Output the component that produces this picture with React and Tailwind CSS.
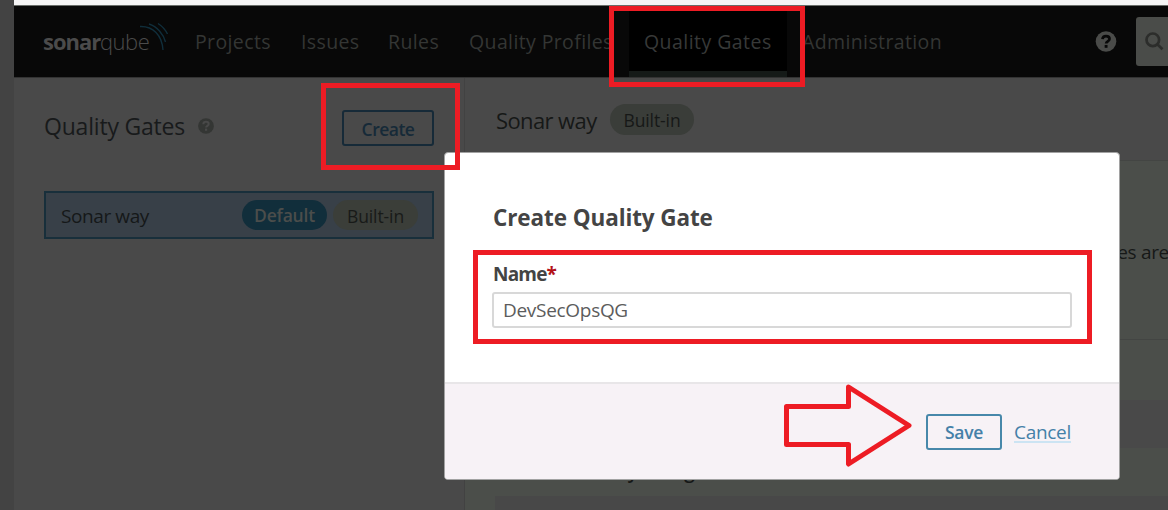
import React from "react";

const NavItem = ({ className = "", children }) => (
  <div className={`h-full shrink-0 whitespace-nowrap pl-[15px] leading-[72px] ${className}`}>{children}</div>
);

const HelpIcon = ({ className, fill, mark }) => (
  <svg className={className} viewBox="0 0 22 22">
    <circle cx="11" cy="11" r="10.8" fill={fill} />
    <path d="M7.3 8.6C7.5 6.4 9 5.3 11 5.3C13.2 5.3 14.7 6.5 14.7 8.3C14.7 10.8 11.2 10.8 11.1 13.1" fill="none" stroke={mark} strokeWidth="2.8" />
    <rect x="9.6" y="14.6" width="3" height="3" fill={mark} />
  </svg>
);

function Header() {
  return (
    <header className="flex h-[71px] shrink-0 bg-[#080808] text-[19.5px] tracking-[0.38px] text-[#343634]">
      <div className="flex h-full w-[166px] shrink-0 pl-[29px]">
        <div className="mt-[19px] flex h-8 items-center text-[22px] tracking-[-1px] text-[#4b4b4b]">
          <span className="w-[57px] font-bold">sonar</span>
          <span className="w-[50px] tracking-[-0.5px] font-light">qube</span>
        </div>
        <svg className="-ml-[11px] mt-[16px] h-[30px] w-[32px]" viewBox="0 0 32 30" fill="none" stroke="#102e3b" strokeWidth="1.4">
          <path d="M1 4.5C14 4 23 13 24 28" />
          <path d="M10 2C18 4.5 24.5 12 26.500 20" />
          <path d="M19 1.500C23 4 26.500 8 28.500 12" />
        </svg>
      </div>
      <NavItem className="w-[106px]">Projects</NavItem>
      <NavItem className="w-[87px]">Issues</NavItem>
      <NavItem className="w-[81px]">Rules</NavItem>
      <NavItem className="w-[175px]">Quality Profiles</NavItem>
      <NavItem className="w-[158px] border-b-[6px] border-[#151a18] bg-black tracking-[0.45px] text-[#373938]">Quality Gates</NavItem>
      <NavItem className="w-[308px]">Administration</NavItem>
      <div className="flex h-full w-[41px] shrink-0 pt-[25px]">
        <HelpIcon className="h-[21px] w-[22px]" fill="#4a4b49" mark="#080808" />
      </div>
      <div className="mt-[11px] h-[49px] w-[40px] shrink-0 rounded-[3px] bg-[#4a4c49] pl-[9px] pt-[15px]">
        <svg className="h-[19px] w-[19px]" viewBox="0 0 19 19" fill="none" stroke="#2c2d2b" strokeWidth="2.7">
          <circle cx="7.8" cy="7.8" r="6.3" />
          <path d="M12.3 12.3L17.5 17.3" />
        </svg>
      </div>
    </header>
  );
}

function Sidebar() {
  return (
    <aside className="w-[451px] shrink-0 border-r border-[#424242] pl-[30px] pr-[30px]">
      <div className="flex h-[113px] items-start">
        <h1 className="mt-[32px] w-[154px] whitespace-nowrap text-[23px] leading-8 tracking-[-0.2px] text-[#181a1b]">Quality Gates</h1>
        <HelpIcon className="mt-[40px] h-[16px] w-[16px]" fill="#343634" mark="#494949" />
        <button className="ml-auto mt-[32px] h-9 w-[92px] rounded-[3px] border-2 border-[#162a38] pt-[2px] text-[17.5px] font-semibold tracking-[-0.5px] text-[#162a38]">Create</button>
      </div>
      <div className="flex h-12 items-center border-2 border-[#182f3b] bg-[#384048] pl-[15px] pr-[14px]">
        <span className="grow pt-[2px] text-[19px] tracking-[-0.4px] text-[#151819]">Sonar way</span>
        <span className="h-[30px] w-[85px] rounded-full bg-[#112e3b] text-center text-[17.5px] font-semibold leading-[30px] tracking-[-0.2px] text-[#4b4d4b]">Default</span>
        <span className="ml-[6px] h-[30px] w-[85px] rounded-full bg-[#3b3e39] text-center text-[17.5px] leading-[32px] tracking-[-0.1px] text-[#181a18]">Built-in</span>
      </div>
    </aside>
  );
}

function Details() {
  return (
    <main className="flex min-w-0 grow flex-col overflow-hidden text-[#161817]">
      <div className="flex h-[83px] shrink-0 items-start border-b border-[#434543] pl-[30px]">
        <h2 className="mt-[26px] w-[115px] whitespace-nowrap pl-px text-[22px] leading-8 tracking-[-0.6px]">Sonar way</h2>
        <span className="mt-[26px] h-[31px] w-[84px] rounded-full bg-[#3a3d39] text-center text-[17.5px] leading-[32px] tracking-[-0.1px]">Built-in</span>
      </div>
      <div className="flex h-[179px] shrink-0 justify-end border-b border-[#434543] bg-[#4b4e4a] pt-[77px]">
        <span className="-mr-px whitespace-nowrap text-[19px] leading-7 tracking-[-0.3px]">es are</span>
      </div>
      <div className="h-[60px] shrink-0 bg-[#4b4e4a]" />
      <div className="h-12 shrink-0 bg-[#494949]" />
      <div className="h-12 shrink-0 bg-[#4b4e4a] pl-[48px] pt-[9px] text-[19px] font-semibold leading-7 tracking-[-0.95px]">Maintainability Rating</div>
      <div className="flex grow bg-[#4b4e4a] pl-[30px]"><div className="grow bg-[#484848]" /></div>
    </main>
  );
}

function CreateDialog() {
  return (
    <section className="absolute left-[444px] top-[152px] flex h-[328px] w-[676px] flex-col overflow-hidden rounded-[4px] border border-[#a2a2a2] bg-white text-[#444]">
      <div className="h-[229px] shrink-0 px-12 pt-[49px]">
        <h2 className="h-8 whitespace-nowrap text-[22.5px] font-bold leading-8 tracking-[-0.1px]">Create Quality Gate</h2>
        <label className="mt-[26px] block h-7 text-[19px] font-bold leading-7 tracking-[-0.8px]">Name<span className="text-[#b31217]">*</span></label>
        <div className="-ml-px mt-[4px] h-[36px] w-[580px] rounded-[3px] border-2 border-[#d8d8d8] pl-[9px] text-[19px] leading-[33px] tracking-[-0.3px] text-[#5c5c5c]">DevSecOpsQG</div>
      </div>
      <footer className="flex grow items-start justify-end border-t-2 border-[#e8e6e8] bg-[#f7f2f6] pr-12 pt-[30px] text-[#4480a8]">
        <button className="h-9 w-[76px] rounded-[3px] border-2 border-[#4788aa] pt-px text-[17.5px] font-semibold tracking-[-0.3px]">Save</button>
        <a className="ml-[12px] mt-[7px] h-[22px] w-[57px] whitespace-nowrap border-b-2 border-[#cce4f3] text-[19px] leading-[23px] tracking-[-0.3px]">Cancel</a>
      </footer>
    </section>
  );
}

export default function App() {
  return (
    <div className="relative flex h-[510px] w-[1168px] overflow-hidden bg-[#494949] font-['Open_Sans','Noto_Sans',sans-serif]">
      <div className="w-[14px] shrink-0 bg-[#434343]" />
      <div className="flex min-w-0 grow flex-col">
        <div className="h-[6px] shrink-0 border-b border-[#696d69] bg-[#f5f5f5]" />
        <Header />
        <div className="h-px shrink-0 bg-[#333]" />
        <div className="flex min-h-0 grow">
          <Sidebar />
          <Details />
        </div>
      </div>
      <CreateDialog />
      <div className="absolute left-[609px] top-[6px] h-[81px] w-[196px] border-[5px] border-[#ed1c24]" />
      <div className="absolute left-[321px] top-[83px] h-[87px] w-[139px] border-[5px] border-[#ed1c24]" />
      <div className="absolute left-[473px] top-[250px] h-[94px] w-[619px] border-[5px] border-[#ed1c24]" />
      <svg className="absolute left-[780px] top-[380px] h-[90px] w-[136px]" viewBox="0 0 136 90">
        <path d="M6.5 26.5H68.5V7L129 45.5L68.5 84V64.5H6.5Z" fill="none" stroke="#ed1c24" strokeWidth="5" strokeLinejoin="round" />
      </svg>
    </div>
  );
}
